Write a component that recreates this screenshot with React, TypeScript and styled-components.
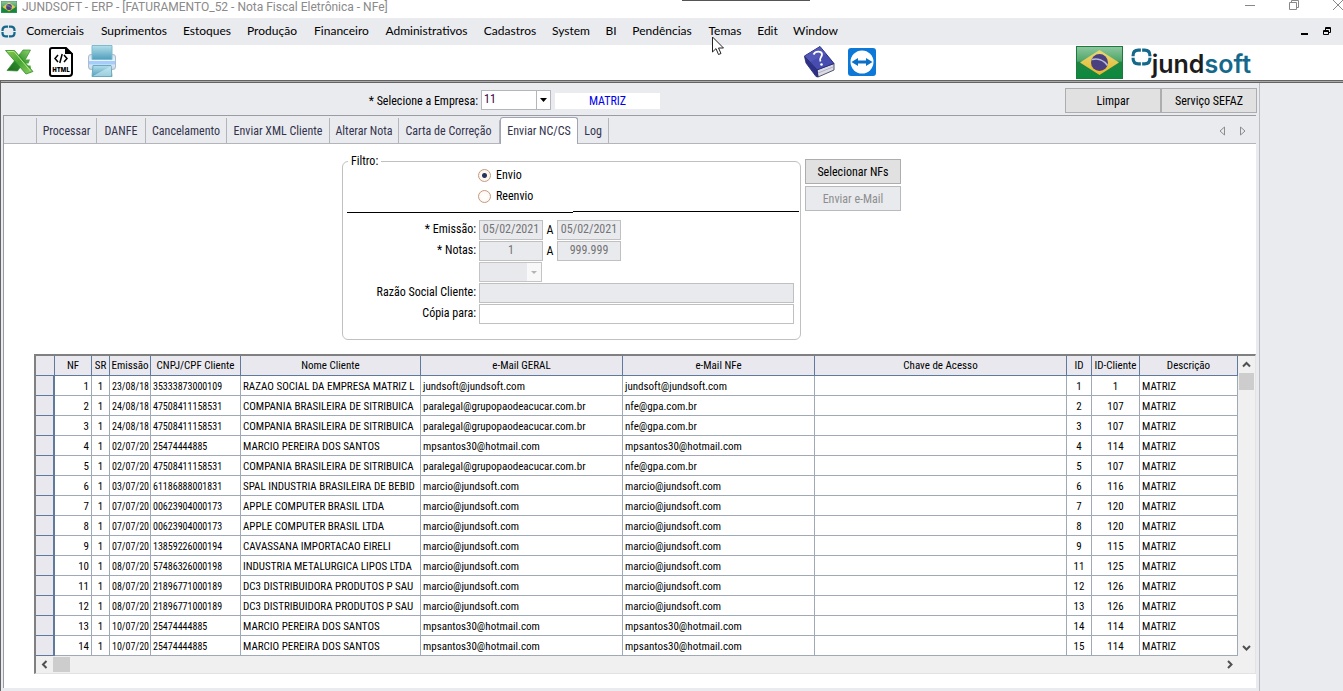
import React, { useState } from "react";
import styled, { createGlobalStyle, css } from "styled-components";

const narrow = `"Roboto Condensed", Roboto, "Liberation Sans", sans-serif`;
const ui = `Lato, "Open Sans", sans-serif`;

const GlobalStyle = createGlobalStyle`
  *, *::before, *::after { box-sizing: border-box; }
  body { margin: 0; background: #eaebef; font-family: ${narrow}; font-size: 12px; line-height: 16px; color: #000; }
  button, input, select { font: inherit; color: inherit; margin: 0; padding: 0; border-radius: 0; }
`;

const Shell = styled.div`
  min-height: 100vh;
  display: flex;
  flex-direction: column;
  position: relative;
  overflow: hidden;
`;

/* title bar */
const TitleBar = styled.header`
  height: 18px;
  background: #fff;
  display: flex;
  align-items: flex-start;
  overflow: hidden;
`;
const TitleIcon = styled.svg`
  flex: none;
  width: 16px;
  height: 12px;
  margin: 1px 0 0 1px;
`;
const Title = styled.h1`
  flex: 1;
  margin: 0 0 0 5px;
  font: 400 12px/14px Roboto, sans-serif;
  color: #8a8a8a;
  white-space: nowrap;
`;
const WindowButtons = styled.div`
  display: flex;
  gap: 32px;
  margin-right: -1px;
`;
const PlainButton = styled.button`
  border: 0;
  background: none;
  display: flex;
  align-items: center;
  justify-content: center;
`;
const TopHandle = styled.div`
  position: absolute;
  top: 0;
  left: 682px;
  width: 128px;
  height: 1px;
  background: #555;
`;

/* menu bar */
const MenuBar = styled.nav`
  height: 27px;
  display: flex;
  align-items: center;
  padding: 0 11px 0 1px;
`;
const MenuList = styled.div`
  flex: 1;
  display: flex;
  margin-left: 2px;
`;
const MenuItem = styled.button<{ $w: number }>`
  width: ${(p) => p.$w}px;
  height: 26px;
  border: 0;
  padding-bottom: 2px;
  background: none;
  display: flex;
  align-items: center;
  justify-content: center;
  font: 400 12px/16px ${ui};
  white-space: nowrap;
`;
const MdiButtons = styled.div`
  display: flex;
  gap: 14px;
`;

/* tool bar */
const ToolBar = styled.div`
  height: 35px;
  background: #fff;
  display: flex;
  align-items: flex-start;
  padding: 0 92px 0 4px;
`;
const ToolGroup = styled.div<{ $gap: number }>`
  display: flex;
  gap: ${(p) => p.$gap}px;
`;
const HelpGroup = styled(ToolGroup)`
  flex: 1;
  margin-left: 684px;
`;
const Logo = styled.div`
  display: flex;
  align-items: flex-start;
  height: 35px;
  color: #1c1c1c;
  svg { margin-top: 3px; }
`;
const LogoText = styled.span`
  font: 600 25px/32px Inter, sans-serif;
  margin-top: 3px;
`;
const LogoAccent = styled.span`
  color: #14688c;
`;

/* workspace */
const Workspace = styled.main`
  flex: 1;
  display: flex;
  border-top: 1px solid #646464;
  border-left: 1px solid #646464;
  box-shadow: inset 0 1px 0 #a9a9a9, inset 0 2px 0 #646464;
  padding-top: 2px;
`;
const FormPane = styled.div`
  flex: 1;
  min-width: 0;
  padding: 0 3px 3px 2px;
  display: flex;
  flex-direction: column;
`;
const SidePane = styled.aside`
  width: 84px;
  flex: none;
  border-left: 1px solid #bcbec4;
`;

const CompanyBar = styled.div`
  height: 32px;
  display: flex;
  align-items: flex-start;
`;
const CompanyLabel = styled.label`
  width: 475px;
  text-align: right;
  margin: 10px 3px 0 0;
`;
const SelectBox = styled.div<{ $w: number }>`
  position: relative;
  width: ${(p) => p.$w}px;
  height: 20px;
  svg {
    position: absolute;
    top: 1px;
    right: 1px;
    pointer-events: none;
  }
`;
const CompanySelect = styled(SelectBox)`
  margin-top: 7px;
`;
const Select = styled.select`
  appearance: none;
  width: 100%;
  height: 100%;
  border: 1px solid #b4b6bb;
  background: #fff;
  padding: 0 2px 2px;
  color: #400040;
  &:disabled { background: #e8e9ed; border-color: #c4c4c6; opacity: 1; }
`;
const CompanyName = styled.output`
  width: 105px;
  height: 16px;
  margin: 10px 0 0 4px;
  background: #fff;
  color: #0000f0;
  text-align: center;
`;
const CompanyActions = styled.div`
  margin-left: auto;
  margin-right: -1px;
  margin-top: 5px;
  display: flex;
`;
const Button = styled.button`
  width: 96px;
  height: 25px;
  border: 1px solid #adadad;
  background: #e1e1e1;
  &:disabled { color: #8e8e8e; background: #e8eaed; border-color: #b8babd; }
`;

/* tabs */
const TabPanel = styled.section`
  flex: 1;
  background: #fff;
  border-left: 1px solid #9a9ba3;
  border-top: 1px solid #9a9ba3;
`;
const TabStrip = styled.div`
  height: 28px;
  background: #eaebef;
  border-bottom: 1px solid #b4b5bb;
  display: flex;
  padding: 2px 10px 0 32px;
`;
const Tab = styled.button<{ $w: number; $active?: boolean }>`
  width: ${(p) => p.$w}px;
  height: 25px;
  border: 0;
  border-left: 1px solid #b4b5bb;
  background: none;
  color: #33334d;
  white-space: nowrap;
  ${(p) =>
    p.$active &&
    css`
      height: 27px;
      margin: -1px -1px 0 2px;
      position: relative;
      background: #fff;
      border: 1px solid #a4a5b4;
      border-bottom: 0;
      border-radius: 3px 3px 0 0;
      box-shadow: -3px 1px 0 -2px #b4b5bb;
    `}
`;
const TabEnd = styled.span`
  flex: 1;
  height: 25px;
  border-left: 1px solid #b4b5bb;
`;
const TabArrows = styled.div`
  display: flex;
  gap: 13px;
  align-items: center;
`;

/* filter form */
const FilterArea = styled.div`
  display: flex;
  align-items: flex-start;
  gap: 4px;
  padding: 9px 0 0 338px;
`;
const Filter = styled.fieldset`
  width: 459px;
  height: 187px;
  margin: 0;
  padding: 0 1px 0 4px;
  border: 1px solid #c0c0c0;
  border-radius: 6px;
`;
const Legend = styled.legend`
  margin-left: 1px;
  padding: 0 3px;
`;
const RadioRow = styled.div`
  display: flex;
  flex-direction: column;
  gap: 5px;
  padding: 0 0 7px 131px;
  margin-top: -2px;
`;
const RadioLabel = styled.label`
  display: flex;
  align-items: center;
  gap: 5px;
`;
const Radio = styled.input`
  appearance: none;
  width: 13px;
  height: 13px;
  margin: 0;
  border: 1px solid #c49a80;
  border-radius: 50%;
  background: radial-gradient(#fff 20%, #fbf1e6 100%);
  &:checked { background: radial-gradient(#24345c 0 2px, #fdf6ee 3px); }
`;
const Divider = styled.div`
  display: flex;
  height: 2px;
  &::before, &::after { content: ""; flex: 1; }
  &::before { border-bottom: 1px solid #000; }
  &::after { border-top: 1px solid #000; }
`;
const Fields = styled.div`
  display: grid;
  grid-template-columns: 129px 1fr;
  grid-auto-rows: 20px;
  gap: 1px 3px;
  margin: 7px 5px 0 0;
`;
const FieldLabel = styled.label`
  grid-column: 1;
  text-align: right;
  line-height: 19px;
`;
const FieldCell = styled.div`
  grid-column: 2;
  display: flex;
  align-items: center;
`;
const Input = styled.input<{ $w?: number }>`
  width: ${(p) => (p.$w ? `${p.$w}px` : "100%")};
  height: 20px;
  border: 1px solid #c0c0c0;
  background: #fff;
  padding: 0 2px 2px;
  text-align: ${(p) => (p.$w ? "center" : "left")};
  &:disabled { background: #e9eaee; color: #747474; }
`;
const Until = styled.span`
  width: 14px;
  text-align: center;
`;
const FilterActions = styled.div`
  display: flex;
  flex-direction: column;
  gap: 2px;
  padding-top: 6px;
`;

/* grid */
const Grid = styled.div`
  margin: 14px 0 0 30px;
  display: grid;
  grid-template-columns: 1fr 17px;
  grid-template-rows: auto 17px;
  border-left: 2px solid #808080;
  border-top: 2px solid #808080;
  border-right: 1px solid #e3e3e3;
  border-bottom: 1px solid #e3e3e3;
`;
const Table = styled.table`
  width: 100%;
  table-layout: fixed;
  border-collapse: separate;
  border-spacing: 0;
  font-size: 11px;
  line-height: 14px;
`;
const Th = styled.th`
  height: 20px;
  padding: 1px 0 0;
  font-weight: 400;
  background: #e8e8ee;
  border-right: 1px solid #5f7a9c;
  border-bottom: 1px solid #5f7a9c;
  white-space: nowrap;
  overflow: hidden;
`;
const Td = styled.td<{ $align: "left" | "right" | "center"; $small?: boolean }>`
  height: 20px;
  padding: 2px 2px 0;
  font-size: ${(p) => (p.$small ? 10 : 11)}px;
  text-align: ${(p) => p.$align};
  border-right: 1px solid #a0a9b6;
  border-bottom: 1px solid #a0a9b6;
  white-space: nowrap;
  overflow: hidden;
`;
const RowHead = styled.th`
  padding: 0;
  background: #e8e8ee;
  border-right: 2px solid #5f7a9c;
  border-bottom: 1px solid #5f7a9c;
`;
const VScroll = styled.div`
  background: #f0f0f0;
  display: flex;
  flex-direction: column;
  justify-content: space-between;
`;
const HScroll = styled.div`
  grid-column: 1 / 3;
  background: #f0f0f0;
  display: flex;
  justify-content: space-between;
  padding-right: 17px;
`;
const ScrollStart = styled.div<{ $vertical?: boolean }>`
  display: flex;
  flex-direction: ${(p) => (p.$vertical ? "column" : "row")};
`;
const Thumb = styled.div<{ $vertical?: boolean }>`
  width: 17px;
  height: 17px;
  background: #cdcdcd;
  background-clip: content-box;
  padding: ${(p) => (p.$vertical ? "0 1px" : "1px 0")};
`;
const ScrollButton = styled(PlainButton)`
  width: 17px;
  height: 17px;
`;
const Pointer = styled.svg`
  position: absolute;
  left: 712px;
  top: 36px;
`;

const menu: [string, number][] = [
  ["Comerciais", 74], ["Suprimentos", 84], ["Estoques", 62], ["Produção", 68],
  ["Financeiro", 71], ["Administrativos", 99], ["Cadastros", 68], ["System", 54],
  ["BI", 26], ["Pendências", 76], ["Temas", 50], ["Edit", 35], ["Window", 61],
];

const tabs: [string, number][] = [
  ["Processar", 60], ["DANFE", 49], ["Cancelamento", 81], ["Enviar XML Cliente", 103],
  ["Alterar Nota", 69], ["Carta de Correção", 100], ["Enviar NC/CS", 78], ["Log", 31],
];

type Align = "left" | "right" | "center";
const columns: { title: string; width?: number; align: Align; small?: boolean }[] = [
  { title: "NF", width: 37, align: "right" },
  { title: "SR", width: 18, align: "center" },
  { title: "Emissão", width: 41, align: "center", small: true },
  { title: "CNPJ/CPF Cliente", width: 90, align: "left", small: true },
  { title: "Nome Cliente", width: 180, align: "left" },
  { title: "e-Mail GERAL", width: 202, align: "left" },
  { title: "e-Mail NFe", width: 192, align: "left" },
  { title: "Chave de Acesso", align: "left" },
  { title: "ID", width: 25, align: "center" },
  { title: "ID-Cliente", width: 48, align: "center" },
  { title: "Descrição", width: 98, align: "left" },
];

const compania = "COMPANIA BRASILEIRA DE SITRIBUICA";
const grupo = "paralegal@grupopaodeacucar.com.br";
const marcio = "marcio@jundsoft.com";
const santos = "mpsantos30@hotmail.com";
const gpa = "nfe@gpa.com.br";
const jund = "jundsoft@jundsoft.com";

const data: string[][] = [
  ["23/08/18", "35333873000109", "RAZAO SOCIAL DA EMPRESA MATRIZ L", jund, jund, "1", "1"],
  ["24/08/18", "47508411158531", compania, grupo, gpa, "2", "107"],
  ["24/08/18", "47508411158531", compania, grupo, gpa, "3", "107"],
  ["02/07/20", "25474444885", "MARCIO PEREIRA DOS SANTOS", santos, santos, "4", "114"],
  ["02/07/20", "47508411158531", compania, grupo, gpa, "5", "107"],
  ["03/07/20", "61186888001831", "SPAL INDUSTRIA BRASILEIRA DE BEBID", marcio, marcio, "6", "116"],
  ["07/07/20", "00623904000173", "APPLE COMPUTER BRASIL LTDA", marcio, marcio, "7", "120"],
  ["07/07/20", "00623904000173", "APPLE COMPUTER BRASIL LTDA", marcio, marcio, "8", "120"],
  ["07/07/20", "13859226000194", "CAVASSANA IMPORTACAO EIRELI", marcio, marcio, "9", "115"],
  ["08/07/20", "57486326000198", "INDUSTRIA METALURGICA LIPOS LTDA", marcio, marcio, "11", "125"],
  ["08/07/20", "21896771000189", "DC3 DISTRIBUIDORA PRODUTOS P SAU", marcio, marcio, "12", "126"],
  ["08/07/20", "21896771000189", "DC3 DISTRIBUIDORA PRODUTOS P SAU", marcio, marcio, "13", "126"],
  ["10/07/20", "25474444885", "MARCIO PEREIRA DOS SANTOS", santos, santos, "14", "114"],
  ["10/07/20", "25474444885", "MARCIO PEREIRA DOS SANTOS", santos, santos, "15", "114"],
];

const FlagShapes = () => (
  <>
    <defs>
      <linearGradient id="flagGreen" x1="0" y1="0" x2="0" y2="1">
        <stop offset="0" stopColor="#8fc8a0" />
        <stop offset="0.45" stopColor="#4fa668" />
        <stop offset="0.5" stopColor="#1f8444" />
        <stop offset="1" stopColor="#0a8a3c" />
      </linearGradient>
      <linearGradient id="flagYellow" x1="0" y1="0" x2="0" y2="1">
        <stop offset="0" stopColor="#e8d878" />
        <stop offset="1" stopColor="#e4b828" />
      </linearGradient>
    </defs>
    <rect x="0.5" y="0.5" width="46" height="32" fill="url(#flagGreen)" stroke="#1d7a3e" />
    <path d="M23.500 4 43 16.500 23.500 29 4 16.500z" fill="url(#flagYellow)" />
    <circle cx="23.500" cy="16.500" r="8.500" fill="#4a4080" />
    <path d="M16 13.500c6-1.500 12 1 15.500 6" fill="none" stroke="#b8bcd8" strokeWidth="1.500" />
  </>
);

const ExcelIcon = () => (
  <svg width="30" height="28" viewBox="0 0 30 28">
    <defs>
      <linearGradient id="xa" x1="0" y1="0" x2="1" y2="1">
        <stop offset="0" stopColor="#8ccc50" />
        <stop offset="0.5" stopColor="#45a334" />
        <stop offset="1" stopColor="#8ed35c" />
      </linearGradient>
      <linearGradient id="xb" x1="1" y1="0" x2="0" y2="1">
        <stop offset="0" stopColor="#8fd46a" />
        <stop offset="0.5" stopColor="#2f8f2c" />
        <stop offset="1" stopColor="#1c6b20" />
      </linearGradient>
    </defs>
    <path d="M26.500 2H19L3 22.500l10.500.500L20 14z" fill="url(#xb)" stroke="#2f8a2c" strokeWidth="0.700" />
    <path d="M18.500 11.500H26l-1.500 4h-3.500zM19 17.500h7.500l.500 3h-6z" fill="#4ba83a" />
    <path d="M1.500 2.500h9L29 23.500 22 26z" fill="url(#xa)" stroke="#2c8a2c" strokeWidth="0.800" />
    <path d="M3.500 3.500H10L26.500 23" fill="none" stroke="#b5e48a" />
  </svg>
);

const HtmlIcon = () => (
  <svg width="26" height="32" viewBox="0 0 26 32">
    <path d="M4 2h14l6 6v19q0 3-3 3H4q-2 0-2-2V4q0-2 2-2z" fill="#fff" stroke="#000" strokeWidth="2" />
    <path d="M17 1l8 7h-8z" fill="#000" />
    <path d="M10 9l-3 3.500 3 3.500M16 9l3 3.500-3 3.500M14.200 8l-2.400 9" fill="none" stroke="#000" strokeWidth="1.500" />
    <text x="13" y="26" textAnchor="middle" fontFamily="Open Sans, sans-serif" fontWeight="800" fontSize="6">HTML</text>
  </svg>
);

const PrinterIcon = () => (
  <svg width="30" height="33" viewBox="0 0 30 33">
    <defs>
      <linearGradient id="pa" x1="0" y1="0" x2="0" y2="1">
        <stop offset="0" stopColor="#b4dfea" />
        <stop offset="1" stopColor="#4f9fbc" />
      </linearGradient>
      <linearGradient id="pb" x1="0" y1="0" x2="0" y2="1">
        <stop offset="0" stopColor="#d4e2f0" />
        <stop offset="0.500" stopColor="#eaf3fd" />
        <stop offset="1" stopColor="#c2d4e4" />
      </linearGradient>
    </defs>
    <rect x="0.500" y="9.500" width="27" height="15" rx="2.500" fill="url(#pb)" stroke="#a8bdd0" />
    <path d="M4 0.500h20v14H4z" fill="url(#pa)" stroke="#7fbace" />
    <path d="M1 15h26v4.500H1z" fill="#a6ccfa" />
    <path d="M1 15.500h26" stroke="#e8f4ff" />
    <path d="M5 20.500h18l1 11H4z" fill="url(#pa)" stroke="#6aa9c0" />
    <path d="M5 31 23 21v10z" fill="#d0edf4" opacity="0.600" />
  </svg>
);

const BookIcon = () => (
  <svg width="34" height="33" viewBox="0 0 34 33">
    <path d="M15 24.500 32 18.500v6.500l-16 7z" fill="#dcdce6" stroke="#50546e" />
    <path d="M16 28l15-6" stroke="#a4a6b4" strokeWidth="0.800" />
    <path d="M2.500 11 18 1.500 32 18.500 15 25z" fill="#474cb0" stroke="#2a2d7c" />
    <path d="M2.500 11 18 1.500l6 7.500L8 17z" fill="#5f64c0" opacity="0.500" />
    <path d="M2.500 11.500 15 25l1 7-2-.500L4 18z" fill="#2c3088" stroke="#24286c" strokeWidth="0.800" />
    <path d="M11.500 9.500c2-4 8-3.500 8.500-.500.400 3.500-3.500 3.500-1.500 7.500" fill="none" stroke="#fff" strokeWidth="1.800" />
    <circle cx="19.500" cy="19.500" r="1.300" fill="#fff" />
  </svg>
);

const RemoteIcon = () => (
  <svg width="28" height="28" viewBox="0 0 28 28">
    <rect width="28" height="28" rx="3" fill="#0c78d8" />
    <circle cx="14" cy="14" r="11.500" fill="#fff" />
    <path d="M3.500 14 10 10v2.600h8V10l6.500 4-6.500 4v-2.600h-8V18z" fill="#0c70c8" />
  </svg>
);

const LogoMark = ({ size = 21 }: { size?: number }) => (
  <svg width={size} height={Math.round(size * 0.85)} viewBox="0 0 20 17">
    <path
      d="M9.400 2H7Q2 2 2 7v.900M10.600 2H13q5 0 5 5v.900M2 9.100V10q0 5 5 5h2.400M18 9.100V10q0 5-5 5h-2.400"
      fill="none" stroke="#14688c" strokeWidth="3"
    />
  </svg>
);

const Chevron = ({ d }: { d: string }) => (
  <svg width="9" height="9" viewBox="0 0 9 9">
    <path d={d} fill="none" stroke="#505050" strokeWidth="2" />
  </svg>
);

export default function App() {
  const [tab, setTab] = useState("Enviar NC/CS");
  const [mode, setMode] = useState("envio");
  const [copy, setCopy] = useState("");

  return (
    <Shell>
      <GlobalStyle />
      <TitleBar>
        <TitleIcon viewBox="0 0 47 33" preserveAspectRatio="none"><FlagShapes /></TitleIcon>
        <Title>JUNDSOFT - ERP - [FATURAMENTO_52 - Nota Fiscal Eletrônica - NFe]</Title>
        <WindowButtons>
          <PlainButton aria-label="Minimizar">
            <svg width="12" height="11" viewBox="0 0 12 11"><path d="M1 5.500h10" stroke="#888" /></svg>
          </PlainButton>
          <PlainButton aria-label="Restaurar">
            <svg width="12" height="11" viewBox="0 0 12 11"><path d="M1.500 2.500h7v7h-7zM3.500 2.500v-2h7v7h-2" fill="none" stroke="#888" /></svg>
          </PlainButton>
          <PlainButton aria-label="Fechar">
            <svg width="12" height="11" viewBox="0 0 12 11"><path d="M1 0l10 10M11 0 1 10" stroke="#888" /></svg>
          </PlainButton>
        </WindowButtons>
      </TitleBar>
      <TopHandle />

      <MenuBar aria-label="Menu principal">
        <LogoMark size={15} />
        <MenuList>
          {menu.map(([label, w]) => <MenuItem key={label} $w={w}>{label}</MenuItem>)}
        </MenuList>
        <MdiButtons>
          <PlainButton aria-label="Minimizar janela">
            <svg width="8" height="9" viewBox="0 0 8 9"><path d="M0 7h7" stroke="#000" strokeWidth="2" /></svg>
          </PlainButton>
          <PlainButton aria-label="Restaurar janela">
            <svg width="9" height="9" viewBox="0 0 9 9"><path d="M.5 3.500h5v4h-5zM.5 4.500h5M2.500 3V.5h5v5H6M2.500 1.500h5" fill="none" stroke="#000" /></svg>
          </PlainButton>
        </MdiButtons>
      </MenuBar>

      <ToolBar>
        <ToolGroup $gap={14}>
          <PlainButton aria-label="Exportar para Excel"><ExcelIcon /></PlainButton>
          <PlainButton aria-label="Exportar para HTML"><HtmlIcon /></PlainButton>
          <PlainButton aria-label="Imprimir"><PrinterIcon /></PlainButton>
        </ToolGroup>
        <HelpGroup $gap={12}>
          <PlainButton aria-label="Ajuda"><BookIcon /></PlainButton>
          <PlainButton aria-label="Acesso remoto"><RemoteIcon /></PlainButton>
        </HelpGroup>
        <ToolGroup $gap={8}>
          <svg width="47" height="34" viewBox="0 -1 47 34"><FlagShapes /></svg>
          <Logo>
            <LogoMark />
            <LogoText>jund<LogoAccent>soft</LogoAccent></LogoText>
          </Logo>
        </ToolGroup>
      </ToolBar>

      <Workspace>
        <FormPane>
          <CompanyBar>
            <CompanyLabel htmlFor="empresa">* Selecione a Empresa:</CompanyLabel>
            <CompanySelect $w={70}>
              <Select id="empresa" defaultValue="11"><option value="11">11</option></Select>
              <svg width="14" height="18" viewBox="0 0 14 18"><path d="M.5 0v18" stroke="#b4b6bb" /><path d="M4 7h7l-3.500 4z" fill="#000" /></svg>
            </CompanySelect>
            <CompanyName htmlFor="empresa">MATRIZ</CompanyName>
            <CompanyActions>
              <Button>Limpar</Button>
              <Button>Serviço SEFAZ</Button>
            </CompanyActions>
          </CompanyBar>

          <TabPanel>
            <TabStrip role="tablist">
              {tabs.map(([label, w]) => (
                <Tab key={label} role="tab" aria-selected={tab === label} $w={w} $active={tab === label} onClick={() => setTab(label)}>
                  {label}
                </Tab>
              ))}
              <TabEnd />
              <TabArrows>
                <PlainButton aria-label="Abas anteriores">
                  <svg width="7" height="10" viewBox="0 0 7 10"><path d="M5.500 1v8L1 5z" fill="none" stroke="#8c8c8c" /></svg>
                </PlainButton>
                <PlainButton aria-label="Próximas abas">
                  <svg width="7" height="10" viewBox="0 0 7 10"><path d="M1.500 1v8L6 5z" fill="none" stroke="#8c8c8c" /></svg>
                </PlainButton>
              </TabArrows>
            </TabStrip>

            <FilterArea>
              <Filter>
                <Legend>Filtro:</Legend>
                <RadioRow>
                  <RadioLabel>
                    <Radio type="radio" name="modo" checked={mode === "envio"} onChange={() => setMode("envio")} />
                    Envio
                  </RadioLabel>
                  <RadioLabel>
                    <Radio type="radio" name="modo" checked={mode === "reenvio"} onChange={() => setMode("reenvio")} />
                    Reenvio
                  </RadioLabel>
                </RadioRow>
                <Divider />
                <Fields>
                  <FieldLabel htmlFor="emissao">* Emissão:</FieldLabel>
                  <FieldCell>
                    <Input id="emissao" $w={64} disabled defaultValue="05/02/2021" />
                    <Until>A</Until>
                    <Input aria-label="Emissão final" $w={64} disabled defaultValue="05/02/2021" />
                  </FieldCell>
                  <FieldLabel htmlFor="notas">* Notas:</FieldLabel>
                  <FieldCell>
                    <Input id="notas" $w={64} disabled defaultValue="1" />
                    <Until>A</Until>
                    <Input aria-label="Nota final" $w={64} disabled defaultValue="999.999" />
                  </FieldCell>
                  <FieldCell>
                    <SelectBox $w={63}>
                      <Select aria-label="Cliente" disabled><option value="" /></Select>
                      <svg width="14" height="18" viewBox="0 0 14 18"><path d="M0 0h14v18H0z" fill="#f8f8f9" /><path d="M4 8h6l-3 3z" fill="#b4b4b8" /></svg>
                    </SelectBox>
                  </FieldCell>
                  <FieldLabel htmlFor="razao">Razão Social Cliente:</FieldLabel>
                  <FieldCell><Input id="razao" disabled /></FieldCell>
                  <FieldLabel htmlFor="copia">Cópia para:</FieldLabel>
                  <FieldCell><Input id="copia" value={copy} onChange={(e) => setCopy(e.target.value)} /></FieldCell>
                </Fields>
              </Filter>
              <FilterActions>
                <Button>Selecionar NFs</Button>
                <Button disabled>Enviar e-Mail</Button>
              </FilterActions>
            </FilterArea>

            <Grid>
              <Table>
                <colgroup>
                  <col style={{ width: 19 }} />
                  {columns.map((c) => <col key={c.title} style={{ width: c.width }} />)}
                </colgroup>
                <thead>
                  <tr>
                    <Th aria-label="Linha" />
                    {columns.map((c) => <Th key={c.title} scope="col">{c.title}</Th>)}
                  </tr>
                </thead>
                <tbody>
                  {data.map((r, i) => {
                    const cells = [String(i + 1), "1", ...r.slice(0, 5), "", r[5], r[6], "MATRIZ"];
                    return (
                      <tr key={i}>
                        <RowHead aria-label={`Linha ${i + 1}`} />
                        {cells.map((text, k) => (
                          <Td key={k} $align={columns[k].align} $small={columns[k].small}>{text}</Td>
                        ))}
                      </tr>
                    );
                  })}
                </tbody>
              </Table>
              <VScroll>
                <ScrollStart $vertical>
                  <ScrollButton aria-label="Rolar para cima"><Chevron d="M1 6.500 4.500 3 8 6.500" /></ScrollButton>
                  <Thumb $vertical />
                </ScrollStart>
                <ScrollButton aria-label="Rolar para baixo"><Chevron d="M1 3 4.500 6.500 8 3" /></ScrollButton>
              </VScroll>
              <HScroll>
                <ScrollStart>
                  <ScrollButton aria-label="Rolar para a esquerda"><Chevron d="M6.500 1 3 4.500 6.500 8" /></ScrollButton>
                  <Thumb />
                </ScrollStart>
                <ScrollButton aria-label="Rolar para a direita"><Chevron d="M3 1 6.500 4.500 3 8" /></ScrollButton>
              </HScroll>
            </Grid>
          </TabPanel>
        </FormPane>
        <SidePane />
      </Workspace>
      <Pointer width="13" height="20" viewBox="0 0 13 20">
        <path d="M.5 1v15l3.500-3.400L6.500 18.500l2.500-1-2.500-5.500h5z" fill="#fff" stroke="#222" />
      </Pointer>
    </Shell>
  );
}
